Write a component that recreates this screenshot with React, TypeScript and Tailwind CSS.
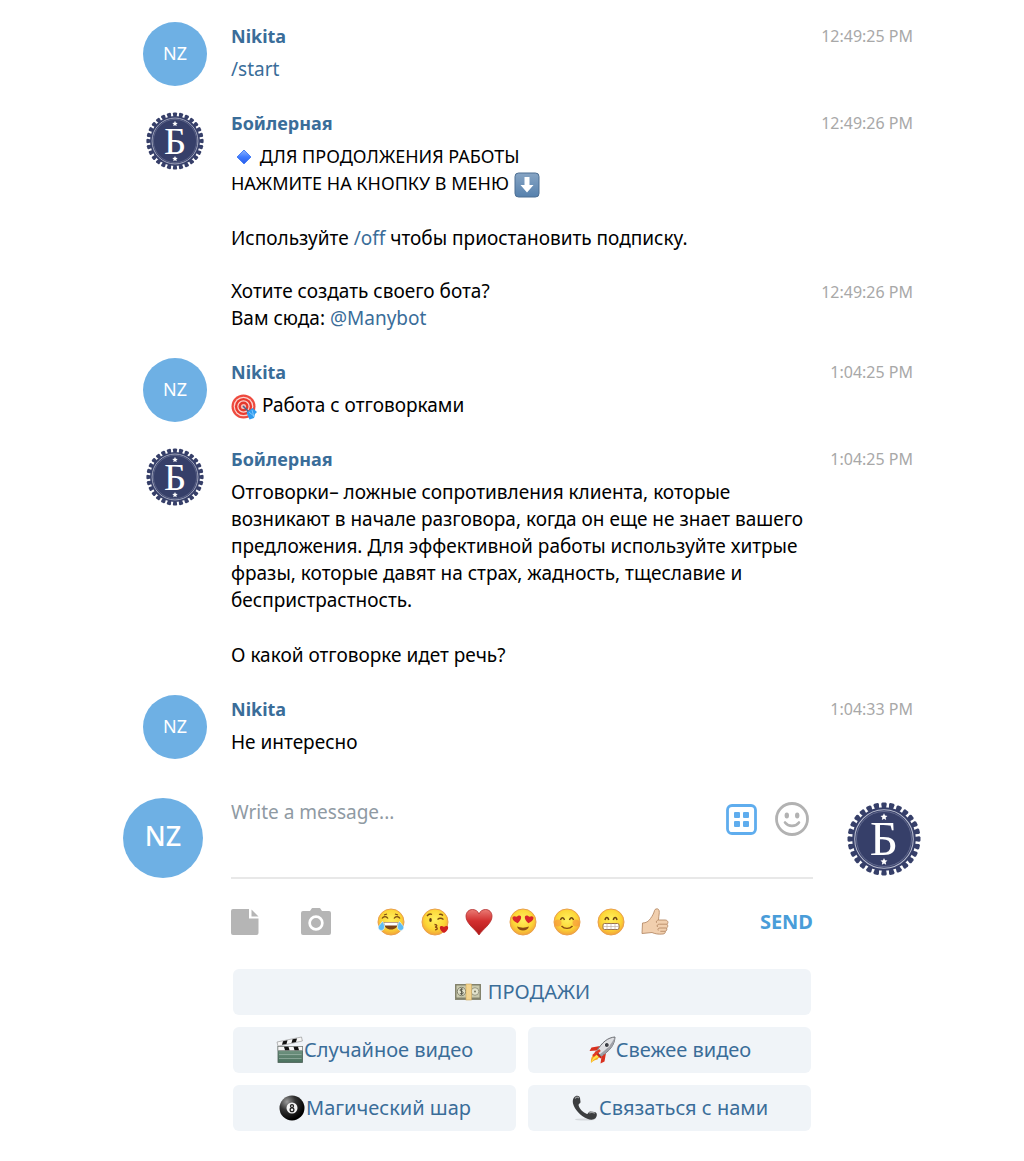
import type { ReactNode } from 'react'
import { useState } from 'react'

function Diamond() {
  return (
    <svg viewBox="1 1 24 24" className="-my-2 inline-block size-6 align-middle" aria-hidden="true">
      <defs>
        <linearGradient id="diamond" x1="0" y1="0" x2="0" y2="1">
          <stop offset="0" stopColor="#8fb6ff" />
          <stop offset="0.5" stopColor="#3f7bff" />
          <stop offset="1" stopColor="#2a5be8" />
        </linearGradient>
      </defs>
      <path d="M14 5l7 7-7 7-7-7z" fill="url(#diamond)" stroke="#4a80f5" strokeLinejoin="round" />
    </svg>
  )
}

function ArrowDown() {
  return (
    <svg viewBox="0 0 26 26" className="-my-2 inline-block size-[26px] align-middle" aria-hidden="true">
      <defs>
        <linearGradient id="arrow" x1="0" y1="0" x2="0" y2="1">
          <stop offset="0" stopColor="#87a5c4" />
          <stop offset="1" stopColor="#5681ad" />
        </linearGradient>
      </defs>
      <rect x="1" y="1" width="24" height="24" rx="3.5" fill="url(#arrow)" stroke="#4d6f93" />
      <path d="M10.500 5h5v8h4L13 20.500 6.500 13h4z" fill="#fff" />
    </svg>
  )
}

function Target() {
  return (
    <svg viewBox="0 0 26 26" className="-my-2 inline-block size-[26px] align-middle" aria-hidden="true">
      <circle cx="12.5" cy="12.5" r="12" fill="#ee4a3e" />
      <circle cx="12.5" cy="12.5" r="9.8" fill="#fbd5d0" />
      <circle cx="12.5" cy="12.5" r="8.6" fill="#ea3a2e" />
      <circle cx="12.5" cy="12.5" r="6.2" fill="#fbd5d0" />
      <circle cx="12.5" cy="12.5" r="5" fill="#e5392d" />
      <circle cx="12.5" cy="12.5" r="2.6" fill="#f6b9b2" />
      <path d="M12 12l7 7" stroke="#45658c" strokeWidth="1.6" />
      <path d="M15.500 18.500l6-4.500 4.500 4-2 2-1 4-4.500 1.500z" fill="#2f9bee" />
      <path d="M18 18l6 5M21 16l2 7" stroke="#8fd0ff" strokeWidth="0.8" />
    </svg>
  )
}

function Banknote() {
  return (
    <svg viewBox="0 0 28 28" className="size-7" aria-hidden="true">
      <rect x="1" y="6" width="26" height="16" fill="#8b8a76" />
      <rect x="2" y="7" width="24" height="13" fill="#c9c9ad" stroke="#77775f" strokeWidth="0.8" />
      <circle cx="7.5" cy="13.5" r="4.2" fill="#e3e3cd" stroke="#6b6b58" strokeWidth="0.8" />
      <circle cx="21" cy="13.5" r="3.8" fill="#e3e3cd" stroke="#8b8a76" strokeWidth="0.8" />
      <circle cx="21" cy="13.5" r="1" fill="#77775f" />
      <path d="M9.200 11.500c-1-1-3.200-.7-3.200.6 0 1.600 3.300 1.100 3.300 2.700 0 1.300-2.300 1.600-3.500.5M7.600 10.300v6.600" fill="none" stroke="#4b4b3d" strokeWidth="0.9" />
      <rect x="12" y="6" width="5.5" height="16" fill="#f3d48f" stroke="#cda75c" strokeWidth="0.6" />
    </svg>
  )
}

function Clapper() {
  return (
    <svg viewBox="0 0 28 28" className="size-7" aria-hidden="true">
      <defs>
        <linearGradient id="slate" x1="0" y1="0" x2="0" y2="1">
          <stop offset="0" stopColor="#7c9f8c" />
          <stop offset="1" stopColor="#4a705d" />
        </linearGradient>
      </defs>
      <path d="M1 6l24.500-5 .9 4L2 10.200z" fill="#f6f6f6" stroke="#777" strokeWidth="0.5" />
      <path d="M7 5.200l4.500-.9-1 3.600-4.500.9zM16.500 3.300l4.500-.9-1 3.600-4.500.9z" fill="#111" />
      <rect x="2" y="10.5" width="24.5" height="16" fill="url(#slate)" stroke="#4a5f55" strokeWidth="0.8" />
      <rect x="2" y="10.5" width="24.5" height="4" fill="#f6f6f6" stroke="#777" strokeWidth="0.5" />
      <path d="M8 10.800h4.500l1 3.500H9zM17.500 10.800H22l1 3.500h-4.500z" fill="#111" />
      <path d="M3 18.500h22.500M3 22.500h22.500" stroke="#a8c0b3" strokeWidth="0.6" />
    </svg>
  )
}

function Rocket() {
  return (
    <svg viewBox="0 0 28 28" className="size-7" aria-hidden="true">
      <path d="M3 27c-.5-5 1.500-9 6-11l4 4c-2 2-3 2-3.500 3.500C8 24 6 24 3 27z" fill="#f6a821" />
      <path d="M3 27c1-4 3-7 6-8l1.500 2C8 22 6 23 3 27z" fill="#ffe14d" />
      <path d="M12 10L3.500 11.500 1.500 15l7-.5zM18 17l-1.500 8.500L12.500 27.500l1-7z" fill="#d9301f" />
      <path d="M8 15l6 6-1.500 1.500-6-6z" fill="#c3271a" />
      <path d="M27 1c-7 .5-13 5-18.500 14.500L13 20C22 15 26.500 9 27 1z" fill="#dedfe3" stroke="#5b5d63" strokeWidth="0.9" />
      <path d="M27 1c-.5 8-5 14-14 19l-1.500-1.500C19 13 23.500 8 27 1z" fill="#9fa1a8" />
      <circle cx="18.8" cy="9" r="2.5" fill="#3c3f46" stroke="#fff" strokeWidth="0.9" />
      <path d="M5 20l7-6" stroke="#e23a25" strokeWidth="2.4" />
    </svg>
  )
}

function EightBall() {
  return (
    <svg viewBox="0 0 28 28" className="size-7" aria-hidden="true">
      <defs>
        <radialGradient id="ball" cx="0.3" cy="0.25" r="0.75">
          <stop offset="0" stopColor="#9a9a9a" />
          <stop offset="0.45" stopColor="#333" />
          <stop offset="1" stopColor="#000" />
        </radialGradient>
      </defs>
      <circle cx="14" cy="14" r="12.5" fill="url(#ball)" />
      <circle cx="14" cy="14" r="5.5" fill="#f4f4f4" />
      <circle cx="14" cy="12.1" r="1.5" fill="none" stroke="#222" strokeWidth="1.3" />
      <circle cx="14" cy="15.8" r="1.9" fill="none" stroke="#222" strokeWidth="1.3" />
    </svg>
  )
}

function Handset() {
  return (
    <svg viewBox="0 0 28 28" className="size-7" aria-hidden="true">
      <ellipse cx="14" cy="25.5" rx="10" ry="1" fill="#d5d9dd" />
      <path d="M3 3.500C5 1 8.500 1.500 9 4l.5 4c0 1.500-2 1.800-2 3 1 4 4.500 7.500 8.500 9 1.200 0 1.500-2.300 3-2.500l4.500.5c3 .5 3 4 .8 6.500-2 1.500-5 1.500-8 .2C9 21.500 4 16 2 9.500c-.5-2.500-.2-4.500 1-6z" fill="#3b3d3f" />
      <path d="M4 4.500c1.500-1.500 3-1.500 4-.5M18 19c2-.8 4-.8 6 .2" stroke="#9a9c9e" strokeWidth="1.2" fill="none" />
    </svg>
  )
}

function Face({ children }: { children: ReactNode }) {
  return (
    <svg viewBox="0 0 28 28" className="size-7" aria-hidden="true">
      <defs>
        <radialGradient id="face" cx="0.5" cy="0.4" r="0.6">
          <stop offset="0" stopColor="#fff05e" />
          <stop offset="0.65" stopColor="#fcd535" />
          <stop offset="1" stopColor="#f2a33a" />
        </radialGradient>
      </defs>
      <circle cx="14" cy="14" r="13" fill="url(#face)" stroke="#eba04a" />
      {children}
    </svg>
  )
}

const heart = 'M0 3.500C-6-.5-3.500-4.500 0-1.800 3.500-4.500 6-.5 0 3.500z'

const quickEmojis = [
  {
    name: 'Joy',
    icon: (
      <Face>
        <path d="M5 10.500c1.500-2.500 4.500-2.500 6 0M17 10.500c1.500-2.500 4.500-2.500 6 0M7 7l3-1M21 7l-3-1" fill="none" stroke="#7a4a12" strokeWidth="1.3" />
        <path d="M6.500 14h15c-.5 5-3.500 7.500-7.500 7.500S7 19 6.500 14z" fill="#7a4214" />
        <path d="M7 14.500h14l-.8 3H7.800z" fill="#fff" />
        <path d="M5.500 13.500c2 2 3 7 .5 8.500-2.500 1.300-5-.5-4.700-3 .2-2 2.700-3 4.200-5.500zM22.500 13.500c-2 2-3 7-.5 8.500 2.500 1.300 5-.5 4.700-3-.2-2-2.700-3-4.200-5.500z" fill="#5fbdf5" stroke="#e2f5ff" strokeWidth="0.7" />
      </Face>
    ),
  },
  {
    name: 'Kiss',
    icon: (
      <Face>
        <path d="M6 8c1.500-2 3.500-2.300 5-1.500M18 6.500c1.500-.5 3 0 4 1M16.500 11.500c1.800-1.600 4-1.600 6 0" fill="none" stroke="#7a4a12" strokeWidth="1.3" />
        <ellipse cx="9.5" cy="12" rx="1.3" ry="1.9" fill="#5d3a12" />
        <path d="M13.500 16.500c3 0 3 2.300.5 2.500 3 .2 3 2.800 0 2.800" fill="none" stroke="#8a4a14" strokeWidth="1.3" />
        <path d={heart} transform="translate(23 21) scale(1.15)" fill="#cf2020" />
      </Face>
    ),
  },
  {
    name: 'Heart',
    icon: (
      <svg viewBox="0 0 28 28" className="size-7" aria-hidden="true">
        <defs>
          <linearGradient id="heart" x1="0" y1="0" x2="0" y2="1">
            <stop offset="0" stopColor="#ea7b74" />
            <stop offset="0.45" stopColor="#d22f2f" />
            <stop offset="1" stopColor="#b01818" />
          </linearGradient>
        </defs>
        <path d="M14 27C10 21 1 15.500 1 8.500 1 4 4 1.500 7.500 1.500c3 0 5.500 1.800 6.500 4.500 1-2.700 3.500-4.500 6.500-4.500C24 1.500 27 4 27 8.500 27 15.500 18 21 14 27z" fill="url(#heart)" stroke="#b32a2a" strokeWidth="0.8" />
      </svg>
    ),
  },
  {
    name: 'Heart eyes',
    icon: (
      <Face>
        <path d={heart} transform="translate(8 11) rotate(-8) scale(1.2)" fill="#d8262a" />
        <path d={heart} transform="translate(20 11) rotate(8) scale(1.2)" fill="#d8262a" />
        <path d="M8 18.500c3.500 1.500 8.500 1.500 12 0-.8 2.700-3 4-6 4s-5.200-1.300-6-4z" fill="#8a4a14" />
      </Face>
    ),
  },
  {
    name: 'Blush',
    icon: (
      <Face>
        <circle cx="5" cy="15" r="3.5" fill="#f58a3c" opacity="0.55" />
        <circle cx="23" cy="15" r="3.5" fill="#f58a3c" opacity="0.55" />
        <path d="M7.500 12c.8-3 3.200-3 4 0M16.500 12c.8-3 3.200-3 4 0" fill="none" stroke="#6b4212" strokeWidth="1.4" />
        <path d="M8.500 18c3 3.200 8 3.200 11 0" fill="none" stroke="#8a4a14" strokeWidth="1.4" />
      </Face>
    ),
  },
  {
    name: 'Grin',
    icon: (
      <Face>
        <path d="M8 12c.7-3.500 3-3.500 3.700 0M16.300 12c.7-3.500 3-3.500 3.700 0" fill="none" stroke="#6b4212" strokeWidth="1.5" />
        <rect x="6" y="15.5" width="16" height="6" rx="1.5" fill="#fff" stroke="#98704a" />
        <path d="M6.500 18.500h15M10 15.500v6M14 15.500v6M18 15.500v6" stroke="#c3b2a0" strokeWidth="0.7" />
      </Face>
    ),
  },
  {
    name: 'Thumbs up',
    icon: (
      <svg viewBox="0 0 28 28" className="size-7" aria-hidden="true">
        <path d="M15 1c2-.8 3.500.8 3.300 3.500-.1 2.500-.8 5-.8 7.500H24c3.500 0 3.500 3.500 2 4.200 1.200 1 1 3.300-.5 3.800.8 1.200.3 3-1.200 3.300.3 1.500-.6 2.500-2.300 2.700-5 .5-8-.2-11-1.500L1 25.500 1.500 15c3.500 0 6-1.500 8-4.500C11.500 8 13.300 4 13.500 2.500c.2-.8.700-1.200 1.500-1.500z" fill="#f1cfae" stroke="#b78b68" strokeWidth="0.9" />
        <path d="M17.500 12c-1.800.3-2.500 1.500-2 2.800M26 16.200h-7.500c-2 0-3 1.200-2 2.800M25.500 20h-6.500c-1.800 0-2.500 1-1.700 2.500M24.300 23.300h-5" fill="none" stroke="#b78b68" strokeWidth="0.9" />
      </svg>
    ),
  },
]

const teeth = Array.from({ length: 28 }, (_, i) => (i * 360) / 28)

function BotLogo({ className }: { className: string }) {
  return (
    <svg viewBox="0 0 72 72" className={className} role="img" aria-label="Бойлерная">
      <g fill="#363f69">
        <circle cx="36" cy="36" r="31" />
        {teeth.map((a) => (
          <path key={a} d="M34 6l-.7-4q0-1.300 1.200-1.500h3q1.200.2 1.200 1.500L38 6z" transform={`rotate(${a} 36 36)`} />
        ))}
      </g>
      <circle cx="36" cy="36" r="28.5" fill="none" stroke="#b9bdd0" strokeWidth="1" />
      <circle cx="36" cy="36" r="26.8" fill="none" stroke="#7f86a6" strokeWidth="0.6" />
      <text x="36" y="52" textAnchor="middle" fontSize="48" fill="#fff" className="font-['Liberation_Serif',serif]">
        Б
      </text>
      <path
        d="M36 11l1 2.200 2.400.3-1.800 1.600.5 2.400L36 16.300l-2.100 1.200.5-2.400-1.800-1.600 2.400-.3zM36 54.500l1 2.200 2.400.3-1.800 1.600.5 2.400-2.100-1.200-2.100 1.200.5-2.400-1.800-1.600 2.400-.3z"
        fill="#fff"
      />
    </svg>
  )
}

const link = 'text-[#3a6d99] hover:underline'

type Message = { id: number; from?: 'Nikita' | 'Бойлерная'; time: string; body: ReactNode }

const messages: Message[] = [
  { id: 1, from: 'Nikita', time: '12:49:25 PM', body: <p><a href="#start" className={link}>/start</a></p> },
  {
    id: 2,
    from: 'Бойлерная',
    time: '12:49:26 PM',
    body: (
      <>
        <p className="text-[18px]"><Diamond /> ДЛЯ ПРОДОЛЖЕНИЯ РАБОТЫ<br />НАЖМИТЕ НА КНОПКУ В МЕНЮ <ArrowDown /></p>
        <p>Используйте <a href="#off" className={link}>/off</a> чтобы приостановить подписку.</p>
      </>
    ),
  },
  {
    id: 3,
    time: '12:49:26 PM',
    body: <p>Хотите создать своего бота?<br />Вам сюда: <a href="#manybot" className={link}>@Manybot</a></p>,
  },
  { id: 4, from: 'Nikita', time: '1:04:25 PM', body: <p><Target /> Работа с отговорками</p> },
  {
    id: 5,
    from: 'Бойлерная',
    time: '1:04:25 PM',
    body: (
      <>
        <p>
          Отговорки– ложные сопротивления клиента, которые<br />
          возникают в начале разговора, когда он еще не знает вашего<br />
          предложения. Для эффективной работы используйте хитрые<br />
          фразы, которые давят на страх, жадность, тщеславие и<br />
          беспристрастность.
        </p>
        <p>О какой отговорке идет речь?</p>
      </>
    ),
  },
  { id: 6, from: 'Nikita', time: '1:04:33 PM', body: <p>Не интересно</p> },
]

function MessageRow({ message }: { message: Message }) {
  return (
    <li className="flex pr-2 pl-5">
      <div className="mr-6 w-16 shrink-0">
        {message.from === 'Nikita' && (
          <div className="flex size-16 items-center justify-center rounded-full bg-[#6eb0e4] pb-[2px] text-[18px] text-white">NZ</div>
        )}
        {message.from === 'Бойлерная' && <BotLogo className="m-[3px] size-[58px]" />}
      </div>
      <div className="min-w-0 flex-1 pb-1">
        {message.from && (
          <a href="#profile" className="mb-[6px] block text-[18px] leading-7 font-bold text-[#3a6d99]">{message.from}</a>
        )}
        <div className="space-y-7 text-[19px] leading-[27px] text-black">{message.body}</div>
      </div>
      <time className="shrink-0 text-[16px] leading-7 text-[#a8a8a8]">{message.time}</time>
    </li>
  )
}

const keys = [
  { label: 'ПРОДАЖИ', icon: <Banknote />, className: 'col-span-2 gap-[6px]' },
  { label: 'Случайное видео', icon: <Clapper />, className: '' },
  { label: 'Свежее видео', icon: <Rocket />, className: '' },
  { label: 'Магический шар', icon: <EightBall />, className: '' },
  { label: 'Связаться с нами', icon: <Handset />, className: '' },
]

export default function App() {
  const [text, setText] = useState('')

  return (
    <div className="min-h-screen bg-white pt-[22px] pb-[30px] pl-5 font-['Noto_Sans',sans-serif]">
      <main className="mx-auto max-w-[798px]">
        <ul className="flex flex-col gap-[22px]">
          {messages.map((m) => (
            <MessageRow key={m.id} message={m} />
          ))}
        </ul>

        <form className="mt-[38px] flex items-start" onSubmit={(e) => e.preventDefault()}>
          <div className="mr-7 flex size-20 shrink-0 items-center justify-center rounded-full bg-[#6eb0e4] pb-1 text-[27px] font-medium text-white">
            NZ
          </div>
          <div className="min-w-0 flex-1">
            <div className="flex h-[81px] items-start border-b-2 border-[#e8e8e8]">
              <textarea
                aria-label="Message"
                placeholder="Write a message..."
                value={text}
                onChange={(e) => setText(e.target.value)}
                className="h-full min-w-0 flex-1 resize-none text-[19px] leading-7 outline-none placeholder:text-[#8f9aa3]"
              />
              <button type="button" aria-label="Bot keyboard" className="mt-[6px] mr-[18px]">
                <svg viewBox="0 0 31 31" className="size-[31px]">
                  <rect x="1.5" y="1.5" width="28" height="28" rx="4.5" fill="none" stroke="#5fadee" strokeWidth="2.8" />
                  <rect x="8" y="8" width="6" height="6" rx="1" fill="#5fadee" />
                  <rect x="17" y="8" width="6" height="6" rx="1" fill="#5fadee" />
                  <rect x="8" y="17" width="6" height="6" rx="1" fill="#5fadee" />
                  <rect x="17" y="17" width="6" height="6" rx="1" fill="#5fadee" />
                </svg>
              </button>
              <button type="button" aria-label="Emoji" className="mt-1 mr-1">
                <svg viewBox="0 0 34 34" className="size-[34px]">
                  <circle cx="17" cy="17" r="15.5" fill="none" stroke="#b2b2b2" strokeWidth="2.8" />
                  <ellipse cx="11.8" cy="13.5" rx="2.2" ry="2.9" fill="#b2b2b2" />
                  <ellipse cx="22.2" cy="13.5" rx="2.2" ry="2.9" fill="#b2b2b2" />
                  <path d="M10 20.500c3.500 4.500 10.500 4.500 14 0" fill="none" stroke="#b2b2b2" strokeWidth="2.6" strokeLinecap="round" />
                </svg>
              </button>
            </div>

            <div className="mt-[29px] flex h-7 items-center">
              <button type="button" aria-label="Attach file" className="mr-[42px]">
                <svg viewBox="0 0 28 28" className="size-7" fill="#b5b5b5">
                  <path d="M2 1h16v9.500h9.500V25a2 2 0 0 1-2 2H2a2 2 0 0 1-2-2V3a2 2 0 0 1 2-2z" />
                  <path d="M20.500 1.500L27.500 8.500h-7z" />
                </svg>
              </button>
              <button type="button" aria-label="Attach photo" className="mr-[46px]">
                <svg viewBox="0 0 30 28" className="h-7 w-[30px]" fill="#b5b5b5">
                  <path fillRule="evenodd" d="M9 3l1.500-2.300A1.500 1.500 0 0 1 12 0h6a1.500 1.500 0 0 1 1.500.7L21 3h7a2 2 0 0 1 2 2v20a2 2 0 0 1-2 2H2a2 2 0 0 1-2-2V5a2 2 0 0 1 2-2zM15 7.300a7.700 7.700 0 1 0 0 15.400 7.700 7.700 0 0 0 0-15.400zM15 10a5 5 0 1 1 0 10 5 5 0 0 1 0-10z" />
                </svg>
              </button>
              <div className="flex gap-4">
                {quickEmojis.map((e) => (
                  <button key={e.name} type="button" aria-label={e.name}>
                    {e.icon}
                  </button>
                ))}
              </div>
              <button type="submit" className="ml-auto text-[20px] font-bold text-[#499dd9]">SEND</button>
            </div>

            <div className="mt-[33px] grid grid-cols-2 gap-3 px-[2px]">
              {keys.map((k) => (
                <button
                  key={k.label}
                  type="button"
                  className={`flex h-[46px] items-center justify-center rounded-md bg-[#f0f4f8] text-[20px] text-[#3a6d99] ${k.className}`}
                >
                  {k.icon}
                  {k.label}
                </button>
              ))}
            </div>
          </div>
          <BotLogo className="mt-1 ml-[34px] size-[74px] shrink-0" />
        </form>
      </main>
    </div>
  )
}
